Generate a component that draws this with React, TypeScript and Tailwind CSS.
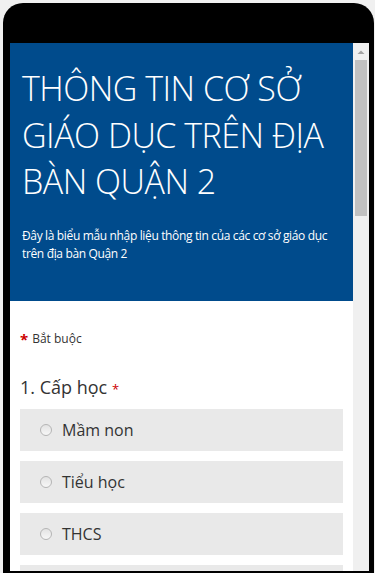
export default function App() {
  const options = ["Mầm non", "Tiểu học", "THCS", "THPT"];

  return (
    <div className="h-[573px] w-[375px] overflow-hidden bg-[#f0f0f0] pl-[3px] pt-[3px]">
      {/* phone frame */}
      <div className="flex h-[570px] w-[371px] flex-col rounded-t-[20px] bg-black pb-[2px] pl-[7px] pr-[5px] pt-[40px]">
        <div className="flex flex-1 overflow-hidden">
          {/* form content */}
          <div
            className="flex-1 bg-white"
            style={{ fontFamily: '"Open Sans", "Noto Sans", sans-serif' }}
          >
            <header className="h-[258px] bg-[#004b8c] pl-[12px] pr-[6px] pt-[22px] text-white">
              <h1 className="pr-[6px] text-[34px] font-light leading-[46.5px] tracking-[-0.5px]">
                THÔNG TIN CƠ SỞ GIÁO DỤC TRÊN ĐỊA BÀN QUẬN 2
              </h1>
              <p className="mt-[22px] text-[12px] leading-[18px] tracking-[-0.35px]">
                Đây là biểu mẫu nhập liệu thông tin của các cơ sở giáo dục trên địa bàn Quận 2
              </p>
            </header>

            <div className="px-[10px] pt-[29px]">
              <div className="flex items-center gap-[4px] text-[12px] leading-[18px] text-[#333]">
                <span className="text-[15px] font-bold leading-[18px] text-[#c00]">*</span>
                <span>Bắt buộc</span>
              </div>

              <div className="mt-[27px] text-[18px] leading-[24px] text-[#333]">
                1. Cấp học <span className="text-[13px] text-[#c00]">*</span>
              </div>

              <div className="mt-[8px] flex flex-col gap-[10px]">
                {options.map((o) => (
                  <div
                    key={o}
                    className="flex h-[42px] w-[323px] items-center gap-[10px] bg-[#e9e9e9] pl-[20px] text-[16px] text-[#333]"
                  >
                    <span className="h-[12px] w-[12px] rounded-full border border-[#b5b5b5] bg-gradient-to-b from-[#e3e3e3] to-[#f7f7f7]" />
                    <span>{o}</span>
                  </div>
                ))}
              </div>
            </div>
          </div>

          {/* scrollbar */}
          <div className="flex w-[16px] flex-col items-center bg-[#f0f0f0]">
            <svg width="16" height="17" viewBox="0 0 16 17">
              <path d="M4.5 11 L8 7.5 L11.5 11 Z" fill="#a3a3a3" />
            </svg>
            <div className="h-[156px] w-[12px] bg-[#c1c1c1]" />
          </div>
        </div>
      </div>
    </div>
  );
}
